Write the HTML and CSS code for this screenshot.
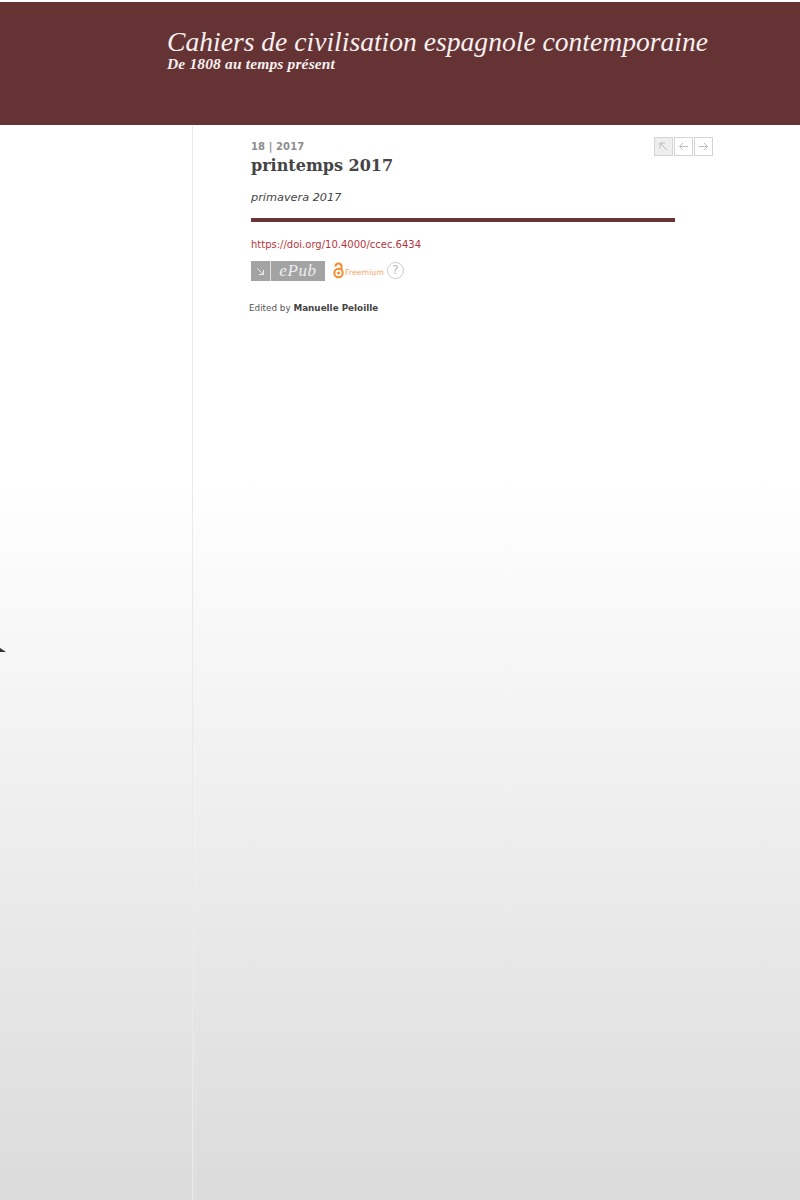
FILE: index.html
```html
<!DOCTYPE html>
<html lang="en">
<head>
  <meta charset="UTF-8" />
  <title>printemps 2017</title>
  <link rel="stylesheet" href="styles.css">
</head>
<body>

  <header class="banner">
    <div class="banner-title">Cahiers de civilisation espagnole contemporaine</div>
    <div class="banner-sub">De 1808 au temps présent</div>
  </header>

  <div class="page">
    <aside class="sidebar"><span class="corner"></span></aside>

    <main class="content">
      <div class="top-row">
        <div class="issue-num">18 | 2017</div>
        <nav class="pager">
          <a class="pager-btn current" href="#">
            <svg width="11" height="11" viewBox="0 0 11 11"><path d="M9 9 2 2M2 7V2h5" /></svg>
          </a>
          <a class="pager-btn" href="#">
            <svg width="11" height="11" viewBox="0 0 11 11"><path d="M10 5.500H1.500M5 2 1.500 5.500 5 9" /></svg>
          </a>
          <a class="pager-btn" href="#">
            <svg width="11" height="11" viewBox="0 0 11 11"><path d="M1 5.500h8.500M6 2l3.500 3.500L6 9" /></svg>
          </a>
        </nav>
      </div>

      <h1>printemps 2017</h1>
      <p class="alt-title">primavera 2017</p>
      <div class="rule"></div>

      <a class="doi" href="#">https://doi.org/10.4000/ccec.6434</a>

      <div class="formats">
        <a class="epub" href="#">
          <span class="epub-arrow">
            <svg width="9" height="9" viewBox="0 0 9 9"><path d="M1.500 1.500 7.500 7.500M7.500 3v4.500H3" /></svg>
          </span>
          <span class="epub-label">ePub</span>
        </a>
        <svg class="oa-icon" width="11" height="17" viewBox="0 0 11 17">
          <circle cx="5.500" cy="11" r="4.200" />
          <circle class="oa-dot" cx="5.500" cy="11" r="1.500" />
          <path d="M2.500 4.500a3 3 0 0 1 6 0V8" />
        </svg>
        <span class="freemium">Freemium</span>
        <span class="help">?</span>
      </div>

      <p class="editor">Edited by <strong>Manuelle Peloille</strong></p>
    </main>
  </div>

</body>
</html>
```

FILE: styles.css
```css
html, body {
  margin: 0;
  padding: 0;
}
body {
  min-height: 1200px;
  padding-top: 2px;
  box-sizing: border-box;
  display: flex;
  flex-direction: column;
  font-family: "DejaVu Sans", Verdana, sans-serif;
  color: #444;
  background: linear-gradient(to bottom, #fff 0, #fff 480px, #dcdbdb 1200px);
}
a {
  text-decoration: none;
}
.banner {
  height: 123px;
  box-sizing: border-box;
  padding: 24px 0 0 167px;
  background: #663335;
  color: #f4f0ef;
  font-family: "Liberation Serif", "Times New Roman", serif;
  font-style: italic;
}
.banner-title {
  font-size: 27.600px;
  line-height: 31px;
  white-space: nowrap;
}
.banner-sub {
  font-size: 15.500px;
  font-weight: bold;
  line-height: 13px;
  letter-spacing: 0.15px;
  white-space: nowrap;
}
.page {
  flex: 1;
  display: flex;
}
.sidebar {
  position: relative;
  width: 192px;
  border-right: 1px solid #ebe9e9;
  box-shadow: 4px 0 0 rgba(255, 255, 255, 0.07);
}
.corner {
  position: absolute;
  left: 0;
  top: 523px;
  width: 0;
  height: 0;
  border-bottom: 4px solid #333;
  border-right: 6px solid transparent;
}
.content {
  width: 462px;
  padding: 12px 0 0 58px;
}
.top-row {
  display: flex;
  justify-content: space-between;
  align-items: center;
}
.issue-num {
  font-size: 10px;
  font-weight: bold;
  color: #8d8d8d;
  letter-spacing: 0.1px;
}
.pager {
  display: flex;
  gap: 1px;
}
.pager-btn {
  width: 17px;
  height: 17px;
  border: 1px solid #d4d4d4;
  display: flex;
  align-items: center;
  justify-content: center;
}
.pager-btn.current {
  background: #eee;
}
.pager-btn svg path {
  fill: none;
  stroke: #bbb;
  stroke-width: 1;
}
h1 {
  margin: 0;
  font-family: "DejaVu Serif", Georgia, serif;
  font-size: 16px;
  line-height: 19px;
  color: #444;
}
.alt-title {
  margin: 15px 0 0;
  font-size: 11.300px;
  line-height: 16px;
  font-style: italic;
  color: #444;
}
.rule {
  width: 424px;
  height: 4px;
  margin-top: 12px;
  background: #6a3335;
}
.doi {
  display: block;
  margin-top: 16px;
  font-size: 10px;
  line-height: 14px;
  color: #b5363a;
}
.formats {
  display: flex;
  align-items: center;
  margin-top: 9px;
  height: 20px;
}
.epub {
  display: flex;
  width: 74px;
  height: 20px;
  background: #a3a3a3;
  color: #eee;
}
.epub-arrow {
  width: 19px;
  border-right: 1px solid #e4e4e4;
  display: flex;
  align-items: center;
  justify-content: center;
}
.epub-arrow path {
  fill: none;
  stroke: #eee;
  stroke-width: 1;
}
.epub-label {
  flex: 1;
  text-align: center;
  font-family: "Liberation Serif", "Times New Roman", serif;
  font-style: italic;
  font-size: 17px;
  line-height: 20px;
  letter-spacing: 0.6px;
}
.oa-icon {
  margin: 0 0 1px 8px;
}
.oa-icon circle, .oa-icon path {
  fill: none;
  stroke: #f68a2e;
  stroke-width: 2;
}
.oa-icon .oa-dot {
  fill: #f68a2e;
  stroke: none;
}
.freemium {
  margin: 2px 0 0 1px;
  font-size: 7.800px;
  color: #f6a25e;
}
.help {
  width: 15px;
  height: 15px;
  margin: 0 0 2px 3px;
  border: 1.500px solid #ccc;
  border-radius: 50%;
  text-align: center;
  font-size: 12px;
  line-height: 15px;
  color: #bbb;
}
.editor {
  margin: 20px 0 0 -2px;
  font-size: 8.800px;
  line-height: 14px;
  color: #555;
}
.editor strong {
  color: #444;
}
```
